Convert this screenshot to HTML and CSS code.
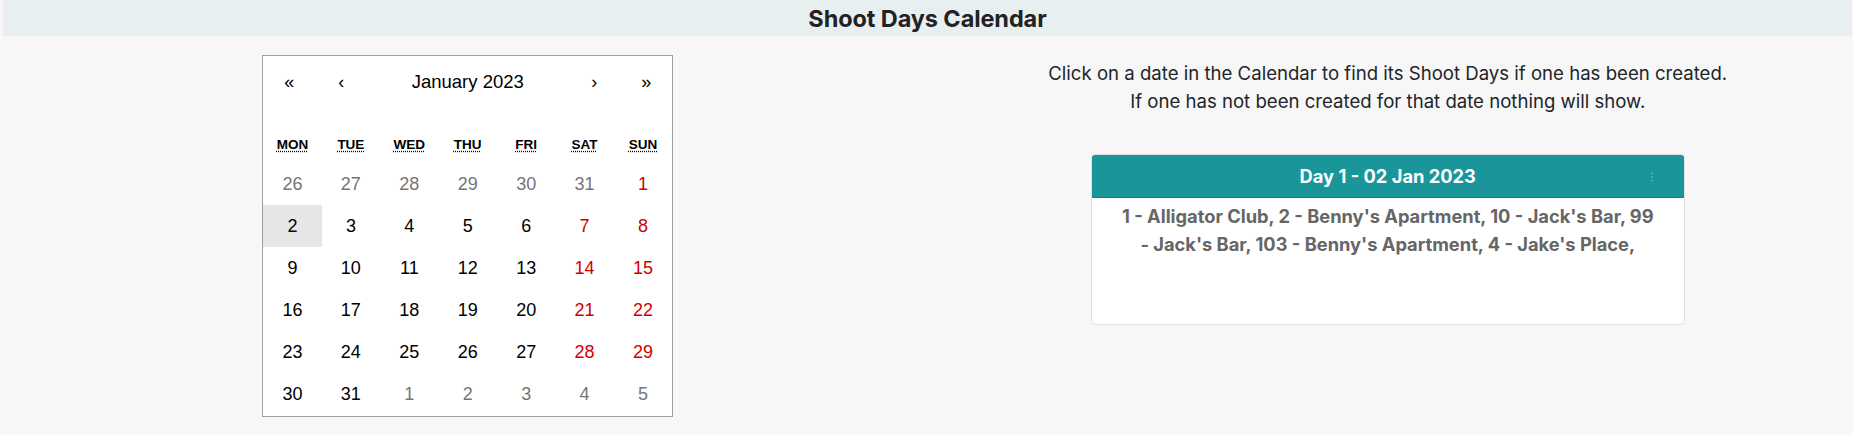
FILE: index.html
```html
<!DOCTYPE html>
<html lang="en">
<head>
<meta charset="utf-8">
<title>Shoot Days Calendar</title>
<link rel="stylesheet" href="styles.css">
</head>
<body>
<header class="page-header">
  <h1 class="page-title">Shoot Days Calendar</h1>
</header>
<main class="layout">
  <section class="col-left">
    <div class="calendar">
      <div class="cal-nav">
        <button class="cal-nav-btn">«</button>
        <button class="cal-nav-btn">‹</button>
        <span class="cal-nav-label">January 2023</span>
        <button class="cal-nav-btn">›</button>
        <button class="cal-nav-btn">»</button>
      </div>
      <div class="cal-weekdays">
        <div class="cal-weekday"><abbr title="Monday">Mon</abbr></div>
        <div class="cal-weekday"><abbr title="Tuesday">Tue</abbr></div>
        <div class="cal-weekday"><abbr title="Wednesday">Wed</abbr></div>
        <div class="cal-weekday"><abbr title="Thursday">Thu</abbr></div>
        <div class="cal-weekday"><abbr title="Friday">Fri</abbr></div>
        <div class="cal-weekday"><abbr title="Saturday">Sat</abbr></div>
        <div class="cal-weekday"><abbr title="Sunday">Sun</abbr></div>
      </div>
      <div class="cal-days">
        <button class="tile neighbor">26</button>
        <button class="tile neighbor">27</button>
        <button class="tile neighbor">28</button>
        <button class="tile neighbor">29</button>
        <button class="tile neighbor">30</button>
        <button class="tile neighbor">31</button>
        <button class="tile weekend">1</button>
        <button class="tile active">2</button>
        <button class="tile">3</button>
        <button class="tile">4</button>
        <button class="tile">5</button>
        <button class="tile">6</button>
        <button class="tile weekend">7</button>
        <button class="tile weekend">8</button>
        <button class="tile">9</button>
        <button class="tile">10</button>
        <button class="tile">11</button>
        <button class="tile">12</button>
        <button class="tile">13</button>
        <button class="tile weekend">14</button>
        <button class="tile weekend">15</button>
        <button class="tile">16</button>
        <button class="tile">17</button>
        <button class="tile">18</button>
        <button class="tile">19</button>
        <button class="tile">20</button>
        <button class="tile weekend">21</button>
        <button class="tile weekend">22</button>
        <button class="tile">23</button>
        <button class="tile">24</button>
        <button class="tile">25</button>
        <button class="tile">26</button>
        <button class="tile">27</button>
        <button class="tile weekend">28</button>
        <button class="tile weekend">29</button>
        <button class="tile">30</button>
        <button class="tile">31</button>
        <button class="tile neighbor">1</button>
        <button class="tile neighbor">2</button>
        <button class="tile neighbor">3</button>
        <button class="tile neighbor">4</button>
        <button class="tile neighbor">5</button>
      </div>
    </div>
  </section>
  <section class="col-right">
    <p class="intro">Click on a date in the Calendar to find its Shoot Days if one has been created.<br>If one has not been created for that date nothing will show.</p>
    <div class="card">
      <div class="card-header">
        <span class="card-title">Day 1 - 02 Jan 2023</span>
        <svg class="card-menu" width="4" height="10" viewBox="0 0 4 10"><circle cx="2" cy="1.5" r="0.9"/><circle cx="2" cy="5" r="0.9"/><circle cx="2" cy="8.5" r="0.9"/></svg>
      </div>
      <div class="card-body">1 - Alligator Club, 2 - Benny's Apartment, 10 - Jack's Bar, 99 - Jack's Bar, 103 - Benny's Apartment, 4 - Jake's Place,</div>
    </div>
  </section>
</main>
</body>
</html>
```
FILE: styles.css
```css
* { box-sizing: border-box; }
body {
  margin: 0;
  background: #f7f7f7;
  font-family: Inter, "Noto Sans", sans-serif;
  color: #212529;
}
.page-header {
  margin: 0 1px 0 3px;
  height: 36px;
  background: #e8eff1;
  display: flex;
  align-items: center;
  justify-content: center;
}
.page-title {
  margin: 0;
  font-size: 23.5px;
  font-weight: 700;
  color: #222;
  letter-spacing: -0.1px;
}
.layout {
  display: grid;
  grid-template-columns: 1fr 1fr;
}
.col-left {
  display: flex;
  justify-content: center;
  padding-left: 9px;
  padding-top: 19px;
}
.calendar {
  width: 411px;
  height: 362px;
  background: #fff;
  border: 1px solid #a0a096;
  font-family: "Liberation Sans", Arial, sans-serif;
  display: flex;
  flex-direction: column;
}
.cal-nav {
  display: flex;
  height: 52px;
  margin-bottom: 18px;
}
.cal-nav-btn {
  width: 52px;
  background: none;
  border: 0;
  padding: 0;
  font-family: "Liberation Sans", Arial, sans-serif;
  font-size: 18px;
  color: #000;
}
.cal-nav-label {
  flex: 1;
  display: flex;
  align-items: center;
  justify-content: center;
  font-size: 18.5px;
  color: #000;
}
.cal-weekdays {
  display: grid;
  grid-template-columns: repeat(7, 1fr);
  height: 37px;
  align-items: center;
}
.cal-weekday {
  text-align: center;
  text-transform: uppercase;
  font-weight: 700;
  font-size: 13.5px;
  color: #000;
}
.cal-weekday abbr {
  text-decoration: underline dotted;
  text-underline-offset: 2px;
}
.cal-days {
  display: grid;
  grid-template-columns: repeat(7, 1fr);
  grid-auto-rows: 42px;
}
.tile {
  background: none;
  border: 0;
  padding: 0;
  font-family: "Liberation Sans", Arial, sans-serif;
  font-size: 18px;
  color: #000;
}
.tile.weekend { color: #d10000; }
.tile.neighbor { color: #757575; }
.tile.active { background: #e6e6e6; }
.col-right {
  display: flex;
  flex-direction: column;
  align-items: center;
  padding-right: 4px;
  padding-top: 23px;
}
.intro {
  margin: 0 0 39px;
  text-align: center;
  font-size: 18.6px;
  line-height: 28px;
  color: #212529;
}
.card {
  width: 594px;
  height: 171px;
  background: #fff;
  border: 1px solid #dee2e6;
  border-radius: 4px;
  overflow: hidden;
}
.card-header {
  height: 43px;
  background: #1a9599;
  border-bottom: 1px solid #16807f;
  display: flex;
  align-items: center;
  justify-content: center;
  position: relative;
}
.card-title {
  color: #fff;
  font-weight: 700;
  font-size: 18.3px;
}
.card-menu {
  position: absolute;
  right: 30px;
  top: 17px;
  fill: #5cbcbf;
}
.card-body {
  padding: 4px 27px 0;
  text-align: center;
  font-size: 18.3px;
  font-weight: 700;
  line-height: 28px;
  color: #666;
}
```
